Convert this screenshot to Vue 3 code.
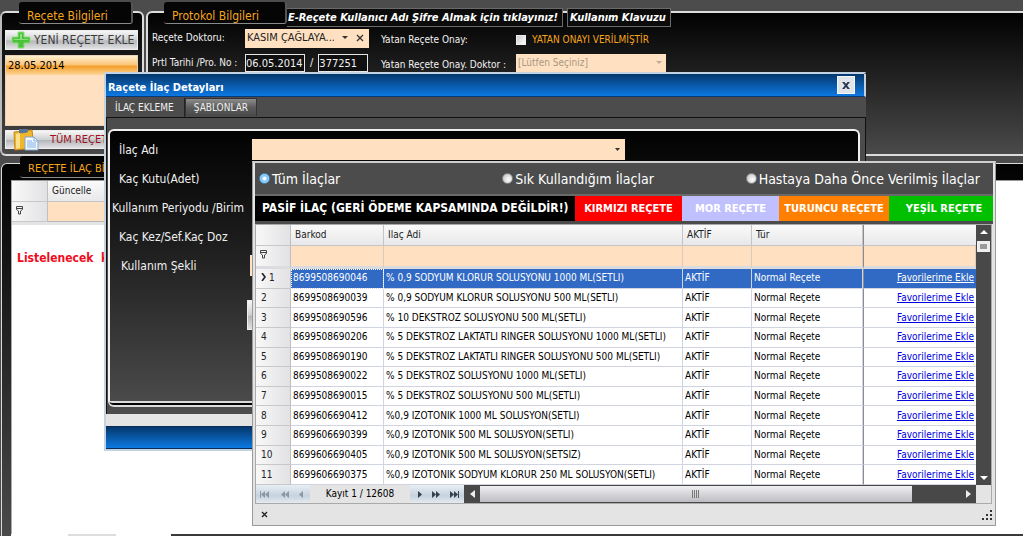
<script setup>
import { ref } from 'vue'

const scope = ref('all')
const approved = ref(false)
const selected = ref(0)

const scopes = [
  { value: 'all', label: 'Tüm İlaçlar' },
  { value: 'frequent', label: 'Sık Kullandığım İlaçlar' },
  { value: 'previous', label: 'Hastaya Daha Önce Verilmiş İlaçlar' }
]

const legend = [
  { cls: 'passive', label: 'PASİF İLAÇ (GERİ ÖDEME KAPSAMINDA DEĞİLDİR!)' },
  { cls: 'red', label: 'KIRMIZI REÇETE' },
  { cls: 'purple', label: 'MOR REÇETE' },
  { cls: 'orange', label: 'TURUNCU REÇETE' },
  { cls: 'green', label: 'YEŞİL REÇETE' }
]

const drugs = [
  ['8699508690046', '% 0,9 SODYUM KLORUR SOLUSYONU 1000 ML(SETLI)'],
  ['8699508690039', '% 0,9 SODYUM KLORUR SOLUSYONU 500 ML(SETLI)'],
  ['8699508690596', '% 10 DEKSTROZ SOLUSYONU 500 ML(SETLI)'],
  ['8699508690206', '% 5 DEKSTROZ LAKTATLI RINGER SOLUSYONU 1000 ML(SETLI)'],
  ['8699508690190', '% 5 DEKSTROZ LAKTATLI RINGER SOLUSYONU 500 ML(SETLI)'],
  ['8699508690022', '% 5 DEKSTROZ SOLUSYONU 1000 ML(SETLI)'],
  ['8699508690015', '% 5 DEKSTROZ SOLUSYONU 500 ML(SETLI)'],
  ['8699606690412', '%0,9 IZOTONIK 1000 ML SOLUSYON(SETLI)'],
  ['8699606690399', '%0,9 IZOTONIK 500 ML SOLUSYON(SETLI)'],
  ['8699606690405', '%0,9 IZOTONIK 500 ML SOLUSYON(SETSIZ)'],
  ['8699606690375', '%0,9 IZOTONIK SODYUM KLORUR 250 ML SOLUSYON(SETLI)']
]
</script>

<template>
  <div class="desktop">
    <div class="top">
      <section class="panel recipes">
        <div class="panel-head"><h2 class="cap">Reçete Bilgileri</h2></div>
        <button class="silver new" type="button">
          <svg width="22" height="18" viewBox="0 0 22 18"><path d="M8 1h6v5h6v6h-6v5H8v-5H2V6h6z" fill="#4cc23c" stroke="#8ee07c" /><path d="M10 3h2v5h6v1H4V8h6z" fill="#8be27a" /></svg>
          <span>YENİ REÇETE EKLE</span>
        </button>
        <ul class="dates" role="listbox" aria-label="Reçeteler">
          <li role="option" aria-selected="true">28.05.2014</li>
        </ul>
        <button class="silver every" type="button">
          <svg width="28" height="22" viewBox="0 0 28 22"><path d="M2 3l18-2 2 18-19 2z" fill="#f0b62c" stroke="#c78a18" /><path d="M4 5l4-1v15l-4 1z" fill="#fbe08a" /><path d="M7 0h9v3q-4 2-9 1z" fill="#5a7896" /><path d="M13 8h9l4 4v9H13z" fill="#f4faff" stroke="#7fa6cf" /><path d="M22 8v4h4M15 12h5M15 14h9M15 16h9M15 18h9" fill="none" stroke="#7fb0e6" /></svg>
          <span>TÜM REÇETELER</span>
        </button>
      </section>

      <section class="panel protocol">
        <div class="panel-head">
          <h2 class="cap">Protokol Bilgileri</h2>
          <a class="banner" href="#">E-Reçete Kullanıcı Adı Şifre Almak için tıklayınız!</a>
          <a class="banner guide" href="#">Kullanım Klavuzu</a>
        </div>
        <div class="fields">
          <label for="doctor">Reçete Doktoru:</label>
          <div class="peach doctor">
            <input id="doctor" value="KASIM ÇAĞLAYA..." />
            <button type="button" aria-label="Aç"><svg width="6" height="4"><path d="M0 0h6L3 3z" fill="#333" /></svg></button>
            <button type="button" aria-label="Temizle"><svg width="8" height="8"><path d="M1 1l6 6M7 1L1 7" stroke="#333" stroke-width="1.3" /></svg></button>
          </div>
          <label for="approval">Yatan Reçete Onay:</label>
          <div class="approve">
            <input id="approval" v-model="approved" type="checkbox" />
            <span>YATAN ONAYI VERİLMİŞTİR</span>
          </div>
          <label for="pdate">Prtl Tarihi /Pro. No :</label>
          <div class="numbers">
            <input id="pdate" class="framed date" value="06.05.2014" />
            <span>/</span>
            <input class="framed" value="377251" aria-label="Protokol No" />
          </div>
          <label for="apdoctor">Yatan Reçete Onay. Doktor :</label>
          <div class="pick small">
            <select id="apdoctor" disabled><option>[Lütfen Seçiniz]</option></select>
            <svg width="6" height="4"><path d="M0 0h6L3 3z" fill="#c0ac96" /></svg>
          </div>
        </div>
      </section>
    </div>

    <section class="panel lower">
      <div class="panel-head"><h2 class="cap">REÇETE İLAÇ BİLGİLERİ</h2></div>
      <div class="sheet">
        <table class="mini">
          <thead>
            <tr><th class="mark"></th><th>Güncelle</th></tr>
            <tr class="filter">
              <td class="mark"><svg width="7" height="9" viewBox="0 0 7 9"><path d="M.5 .5h6v3l-2 1.500v3h-2v-3l-2-1.500zM1 2.500h5" fill="none" stroke="#444" /></svg></td>
              <td></td>
            </tr>
          </thead>
        </table>
        <p>Listelenecek &nbsp;kayıt</p>
      </div>
      <div class="edge"><span></span></div>
    </section>

    <section class="dialog" role="dialog" aria-label="Raçete İlaç Detayları">
      <header class="title">
        <h1>Raçete İlaç Detayları</h1>
        <button type="button" aria-label="Kapat"><svg width="8" height="7" viewBox="0 0 10 9"><path d="M0 0h3l2 2.500L7 0h3L6.500 4.500 10 9H7L5 6.500 3 9H0l3.500-4.500z" fill="#26364e" /></svg></button>
      </header>
      <nav class="tabs">
        <button type="button" class="on">İLAÇ EKLEME</button>
        <button type="button">ŞABLONLAR</button>
      </nav>
      <div class="page">
        <form class="form" @submit.prevent>
          <label for="drug">İlaç Adı</label>
          <div class="pick">
            <select id="drug"><option></option></select>
            <svg width="6" height="4"><path d="M0 0h5L2.500 3z" fill="#333" /></svg>
          </div>
          <span>Kaç Kutu(Adet)</span>
          <span class="wide">Kullanım Periyodu /Birim</span>
          <span>Kaç Kez/Sef.Kaç Doz</span>
          <label for="usage" class="usage">Kullanım Şekli</label>
          <input id="usage" class="under" />
          <button type="button" class="silver save" aria-label="Kaydet"></button>
        </form>
      </div>
      <div class="strip"></div>
      <footer></footer>
    </section>

    <section class="popup">
      <div class="scopes" role="radiogroup" aria-label="İlaç listesi">
        <label v-for="s in scopes" :key="s.value">
          <input v-model="scope" type="radio" name="scope" :value="s.value" />{{ s.label }}
        </label>
      </div>
      <div class="legend">
        <span v-for="l in legend" :key="l.cls" :class="l.cls">{{ l.label }}</span>
      </div>
      <div class="grid">
        <div class="body">
          <table>
            <colgroup><col class="c0" /><col class="c1" /><col /><col class="c3" /><col class="c4" /><col class="c5" /></colgroup>
            <thead>
              <tr><th class="mark"></th><th>Barkod</th><th>Ilaç Adi</th><th>AKTİF</th><th>Tür</th><th class="sep"></th></tr>
              <tr class="filter">
                <td class="mark"><svg width="7" height="9" viewBox="0 0 7 9"><path d="M.5 .5h6v3l-2 1.500v3h-2v-3l-2-1.500zM1 2.500h5" fill="none" stroke="#444" /></svg></td>
                <td></td><td></td><td></td><td></td><td class="sep"></td>
              </tr>
            </thead>
            <tbody>
              <tr v-for="(d, i) in drugs" :key="d[0]" :class="{ sel: i === selected }" @click="selected = i">
                <td class="mark"><svg v-if="i === selected" width="5" height="8" viewBox="0 0 5 8"><path d="M1 0l3 4-3 4" fill="none" stroke="#222" stroke-width="1.600" /></svg>{{ i + 1 }}</td>
                <td class="code">{{ d[0] }}</td>
                <td>{{ d[1] }}</td>
                <td>AKTİF</td>
                <td>Normal Reçete</td>
                <td class="sep"><a href="#" @click.prevent>Favorilerime Ekle</a></td>
              </tr>
            </tbody>
          </table>
          <div class="vbar">
            <svg width="8" height="4"><path d="M4 0l4 4H0z" fill="#fff" /></svg>
            <i></i>
            <svg width="8" height="4"><path d="M0 0h8L4 4z" fill="#fff" /></svg>
          </div>
        </div>
        <div class="navigator">
          <div class="nav dim">
            <button type="button" aria-label="İlk"><svg width="10" height="7"><path d="M0 0h1v7H0zM5 0v7L1 3.500zM9 0v7L5 3.500z" /></svg></button>
            <button type="button" aria-label="Önceki sayfa"><svg width="8" height="7"><path d="M4 0v7L0 3.500zM8 0v7L4 3.500z" /></svg></button>
            <button type="button" aria-label="Önceki"><svg width="4" height="7"><path d="M4 0v7L0 3.500z" /></svg></button>
          </div>
          <span class="count">Kayıt 1 / 12608</span>
          <div class="nav">
            <button type="button" aria-label="Sonraki"><svg width="4" height="7"><path d="M0 0v7l4-3.500z" /></svg></button>
            <button type="button" aria-label="Sonraki sayfa"><svg width="8" height="7"><path d="M0 0v7l4-3.500zM4 0v7l4-3.500z" /></svg></button>
            <button type="button" aria-label="Son"><svg width="10" height="7"><path d="M0 0v7l4-3.500zM4 0v7l4-3.500zM8 0h1v7H8z" /></svg></button>
          </div>
          <div class="hbar">
            <svg width="5" height="8"><path d="M5 0v8L0 4z" fill="#eee" /></svg>
            <i><svg width="8" height="8"><path d="M.5 0v8M2.500 0v8M4.500 0v8M6.500 0v8" stroke="#777" /></svg></i>
            <svg width="5" height="8"><path d="M0 0v8l5-4z" fill="#eee" /></svg>
          </div>
        </div>
      </div>
      <div class="status">
        <button type="button" aria-label="Kapat"><svg width="7" height="7"><path d="M1 1l5 5M6 1L1 6" stroke="#222" stroke-width="1.400" /></svg></button>
        <svg width="10" height="10"><path d="M8 0h2v2H8zM4 4h2v2H4zM8 4h2v2H8zM0 8h2v2H0zM4 8h2v2H4zM8 8h2v2H8z" fill="#333" /></svg>
      </div>
    </section>
  </div>
</template>

<style>
html, body { background: #4c4c4c; }
</style>

<style scoped>
* { box-sizing: border-box; }
.desktop {
  position: relative; display: flex; flex-direction: column; gap: 7px;
  min-height: 100vh; padding-top: 11px; overflow: hidden; background: #4c4c4c;
  font: 10px/14px "DejaVu Sans Condensed", "DejaVu Sans", sans-serif; color: #000;
}
h1, h2, p, ul { margin: 0; padding: 0; list-style: none; }
button, input, select { font: inherit; color: inherit; border: 0; padding: 0; margin: 0; background: none; border-radius: 0; min-width: 0; }
svg { display: block; flex: none; }
table { border-collapse: separate; border-spacing: 0; }

.top { display: flex; gap: 2px; height: 145px; }
.panel { border: 2px solid #dcdcdc; border-radius: 6px; background: linear-gradient(#020202, #1e1e1e 40%, #4a4a4a); }
.panel-head { display: flex; height: 22px; margin-top: -11px; }
.cap {
  display: flex; align-items: center; padding: 6px 8px 0; border-radius: 3px;
  background: #050505; border-right: 2px solid #555; border-bottom: 1px solid #8a8a8a;
  font-size: 12px; font-weight: normal; line-height: 14px; color: #f6a51c; white-space: nowrap;
}
.recipes { width: 144px; flex: none; padding: 0 4px 0 3px; border-left-color: #bbb; }
.recipes .cap { width: 114px; margin-left: 14px; }
.silver { display: flex; align-items: center; background: linear-gradient(#f6f6f6, #cfd0d2 50%, #b4b6b9 55%, #e2e2e4); border: 1px solid #eee; }
.new { width: 100%; height: 20px; margin-top: 6px; padding-left: 4px; gap: 2px; font-size: 12px; color: #3c3c3c; white-space: nowrap; }
.dates { height: 71px; margin-top: 5px; background: #ffe1c1; border: 1px solid #e8d2b8; }
.dates li { height: 19px; padding: 3px 2px; background: linear-gradient(#fff0cf, #fbc57a 45%, #f5a02c 55%, #fdd69a); font-size: 11px; }
.every { width: 100%; height: 19px; margin-top: 4px; padding-left: 6px; gap: 10px; font-size: 11px; color: #a01020; white-space: nowrap; overflow: visible; }

.protocol { flex: 1; margin-right: -12px; }
.protocol .cap { width: 123px; margin-left: 16px; }
.banner {
  margin-top: 6px; height: 19px; padding: 0 4px 0 1px; border: 1px solid #6a6a6a; border-left: 0; background: #0b0b0b;
  font-size: 11px; font-weight: bold; font-style: italic; line-height: 17px; color: #fff; text-decoration: none; white-space: nowrap;
}
.guide { margin-left: 4px; border-left: 1px solid #6a6a6a; padding-left: 2px; }
.fields {
  display: grid; grid-template-columns: 93px 124px auto auto; grid-template-rows: 20px 20px; justify-content: start;
  align-items: center; row-gap: 5px; margin: 4px 0 0 4px; color: #f2f2f2; white-space: nowrap;
}
.fields label:nth-of-type(even) { width: 147px; padding: 3px 0 0 12px; }
.peach { display: flex; align-items: center; height: 19px; padding: 0 5px 0 2px; gap: 8px; background: #ffe1c1; color: #222; }
.peach input { flex: 1; width: 0; font-size: 11px; }
.approve { display: flex; align-items: center; gap: 6px; padding-top: 3px; color: #f6a51c; }
.approve input { appearance: none; width: 10px; height: 10px; background: linear-gradient(135deg, #c8c8d0, #fff); border: 1px solid #eee; }
.numbers { display: flex; align-items: center; gap: 5px; font-size: 11px; }
.framed { width: 50px; height: 18px; border: 1px solid #e6e6e6; background: #101010; }
.date { width: 60px; }
.pick { display: grid; align-items: center; background: #ffe1c1; }
.pick select { grid-area: 1 / 1; width: 100%; height: 100%; padding-left: 2px; appearance: none; opacity: 1; }
.pick svg { grid-area: 1 / 1; justify-self: end; margin-right: 4px; pointer-events: none; }
.small { width: 150px; height: 19px; color: #a89884; }

.lower { flex: 1; display: flex; flex-direction: column; margin-right: -12px; margin-left: 1px; border-top-width: 1px; border-left-width: 1px; border-bottom: 0; border-radius: 6px 0 0 0; }
.lower .panel-head { margin-top: -8px; }
.lower .cap { margin-left: 18px; padding-top: 4px; font-size: 11px; }
.sheet { flex: 1; margin: 2px 0 0 9px; background: #fff; border-left: 1px solid #aaa; border-top: 1px solid #999; }
.mini { width: 90%; border-bottom: 3px solid #e4e4e4; }
.mini th:last-child { padding-left: 4px; }
.sheet p { margin: 26px 5px; font-size: 12px; font-weight: bold; color: #f00c1c; white-space: nowrap; }
.edge { height: 2px; margin-left: 9px; padding-left: 57px; background: linear-gradient(90deg, #fff 160px, #3a3a3c 160px); }
.edge span { display: block; width: 48px; height: 2px; background: #ddd; }

th { height: 21px; padding: 0 4px; background: linear-gradient(#fafafa, #e8e8ea); border-right: 1px solid #c4c4c8; border-bottom: 1px solid #c4c4c8; font-weight: normal; text-align: left; color: #222; }
.filter td { height: 20px; padding: 0; background: #ffe1c1; border-right: 1px solid #dccbb8; border-bottom: 1px solid #b8b8b8; }
th.mark, td.mark, .filter td.mark, .sel td.mark { width: 35px; background: linear-gradient(90deg, #f8f8f8, #e2e2e4); border-right: 1px solid #c0c0c4; border-bottom: 1px solid #c8c8cc; color: #222; }
.mini th.mark, .mini .filter td.mark { width: 36px; }
.filter .mark svg { margin-left: 4px; }

.dialog { position: absolute; left: 104px; right: 157px; top: 72px; border: 2px solid #c4d3e2; border-right-color: #4c4c4c; background: #4c4c4c; }
.title { display: flex; align-items: center; justify-content: space-between; height: 23px; padding: 0 9px 0 2px; margin-right: -2px; border-right: 2px solid #c4d3e2; background: linear-gradient(#05376c, #0c79e2); border-bottom: 1px solid #083a78; }
.title h1 { padding-top: 5px; font-size: 11px; line-height: 14px; color: #fff; }
.title button { display: grid; place-items: center; width: 18px; height: 18px; background: #dfe3ea; border: 1px solid #f4f6f8; }
.tabs { display: flex; height: 20px; color: #f0f0f0; }
.tabs button { height: 18px; margin-top: 1px; padding: 0 8px; border: 1px solid #333; border-bottom: 0; background: linear-gradient(#8c8c8c, #5c5c5c 50%, #484848); }
.tabs .on { height: 19px; border: 0; border-right: 1px solid #222; padding: 0 10px 0 9px; background: #4c4c4c; }
.page { margin-right: -2px; border: 1px solid #111; border-bottom: 0; padding: 11px 5px 7px 1px; }
.form {
  position: relative; display: grid; grid-template-columns: 142px 373px; grid-auto-rows: 21px; row-gap: 8px; align-items: center;
  height: 278px; padding: 8px 0 0; align-content: start; border: 2px solid #f0f0f0; border-bottom: 6px double #dcdcdc; border-radius: 6px;
  background: linear-gradient(#020202, #181818 35%, #4a4a4a); font-size: 12px; color: #f0f0f0; white-space: nowrap;
}
.form > span, .form > label { grid-column: 1; padding-left: 9px; }
.form > .wide { padding-left: 2px; }
.form > .usage { padding-left: 11px; }
.form .pick { height: 21px; }
.under { grid-column: 2; height: 21px; margin-left: -2px; background: #ffe1c1; }
.save { grid-column: 2; width: 80px; height: 30px; margin: 16px 0 0 -5px; align-self: start; }
.strip { height: 12px; background: #e4e4e4; margin-right: -2px; }
.dialog footer { height: 23px; margin-right: -2px; background: linear-gradient(#05376c, #0c79e2); border: solid #0a2c58; border-width: 1px 0; }

.popup { position: absolute; left: 252px; right: 27px; top: 161px; border: 1px solid #9a9a9a; border-top: 2px solid #cfcfcf; background: #e4e4e4; padding: 0 2px; }
.scopes { display: grid; grid-template-columns: repeat(3, 1fr); height: 33px; padding: 0 4px; align-items: center; background: #4c4c4c; border-bottom: 2px solid #6a6a6a; color: #fff; font-size: 14px; }
.scopes label { display: flex; align-items: center; gap: 2px; white-space: nowrap; }
.scopes input { appearance: none; width: 11px; height: 11px; border-radius: 50%; background: radial-gradient(circle at 60% 60%, #fff, #b8b8b8); border: 1px solid #888; }
.scopes input:checked { background: radial-gradient(circle, #fff 15%, #7cc4f4 45%, #d8eefc); border-color: #3f87c0; }
.legend { display: grid; grid-template-columns: 320fr 107fr 97fr 110fr 104fr; height: 28px; border-bottom: 3px solid #4c4c4c; color: #fff; font-size: 11px; font-weight: bold; line-height: 25px; white-space: nowrap; text-align: center; }
.passive { padding-left: 7px; background: #000; font-size: 12px; text-align: left; }
.red { background: #f00; }
.purple { background: #c0c0ff; }
.orange { background: #ff8000; }
.green { background: #00c000; padding-left: 6px; }

.grid { border: 1px solid #aaa; margin-right: 1px; }
.body { display: flex; }
.body table { flex: 1; height: 260px; table-layout: fixed; background: #fff; }
.c0 { width: 35px; } .c1 { width: 93px; } .c3 { width: 69px; } .c4 { width: 111px; } .c5 { width: 113px; }
.body .filter td { height: 23px; border-bottom: 3px solid #dcdce0; }
tbody td { padding: 0 2px; border-right: 1px solid #d0d4e0; border-bottom: 1px solid #d0d4e0; white-space: nowrap; overflow: hidden; }
tbody td.mark { padding-left: 5px; }
.mark svg { display: inline-block; margin-right: 3px; }
.sep { border-left: 1px solid #8c8c90; border-right: 0; text-align: right; }
.sep a { color: #0000e0; }
.sel td { background: #316ac5; color: #fff; }
.sel .code { outline: 1px dotted #fff; outline-offset: -1px; }
.sel .sep a { color: #fff; }
.vbar { display: flex; flex-direction: column; align-items: center; width: 15px; padding: 5px 0; background: #484848; }
.vbar i { width: 13px; height: 11px; margin-top: 7px; margin-bottom: auto; border: 3px solid #eee; background: #999; }
.navigator { display: flex; height: 18px; align-items: stretch; padding-right: 15px; }
.nav { display: flex; width: 54px; justify-content: space-between; align-items: center; padding: 0 4px 0 8px; background: linear-gradient(#e8eef4, #c6d2de 60%, #e4eaf0); fill: #34424e; }
.nav.dim { fill: #8c98a4; padding: 0 7px 0 4px; }
.count { width: 100px; text-align: center; line-height: 17px; white-space: nowrap; }
.hbar { display: flex; flex: 1; align-items: center; padding: 0 5px 0 6px; background: #484848; }
.hbar i { display: grid; place-items: center; flex: 1; height: 16px; margin: 0 auto 0 5px; max-width: 432px; background: linear-gradient(#f0f0f2, #bcbcc2); }
.status { display: flex; align-items: center; justify-content: space-between; height: 21px; padding: 0 1px 0 6px; }
</style>
